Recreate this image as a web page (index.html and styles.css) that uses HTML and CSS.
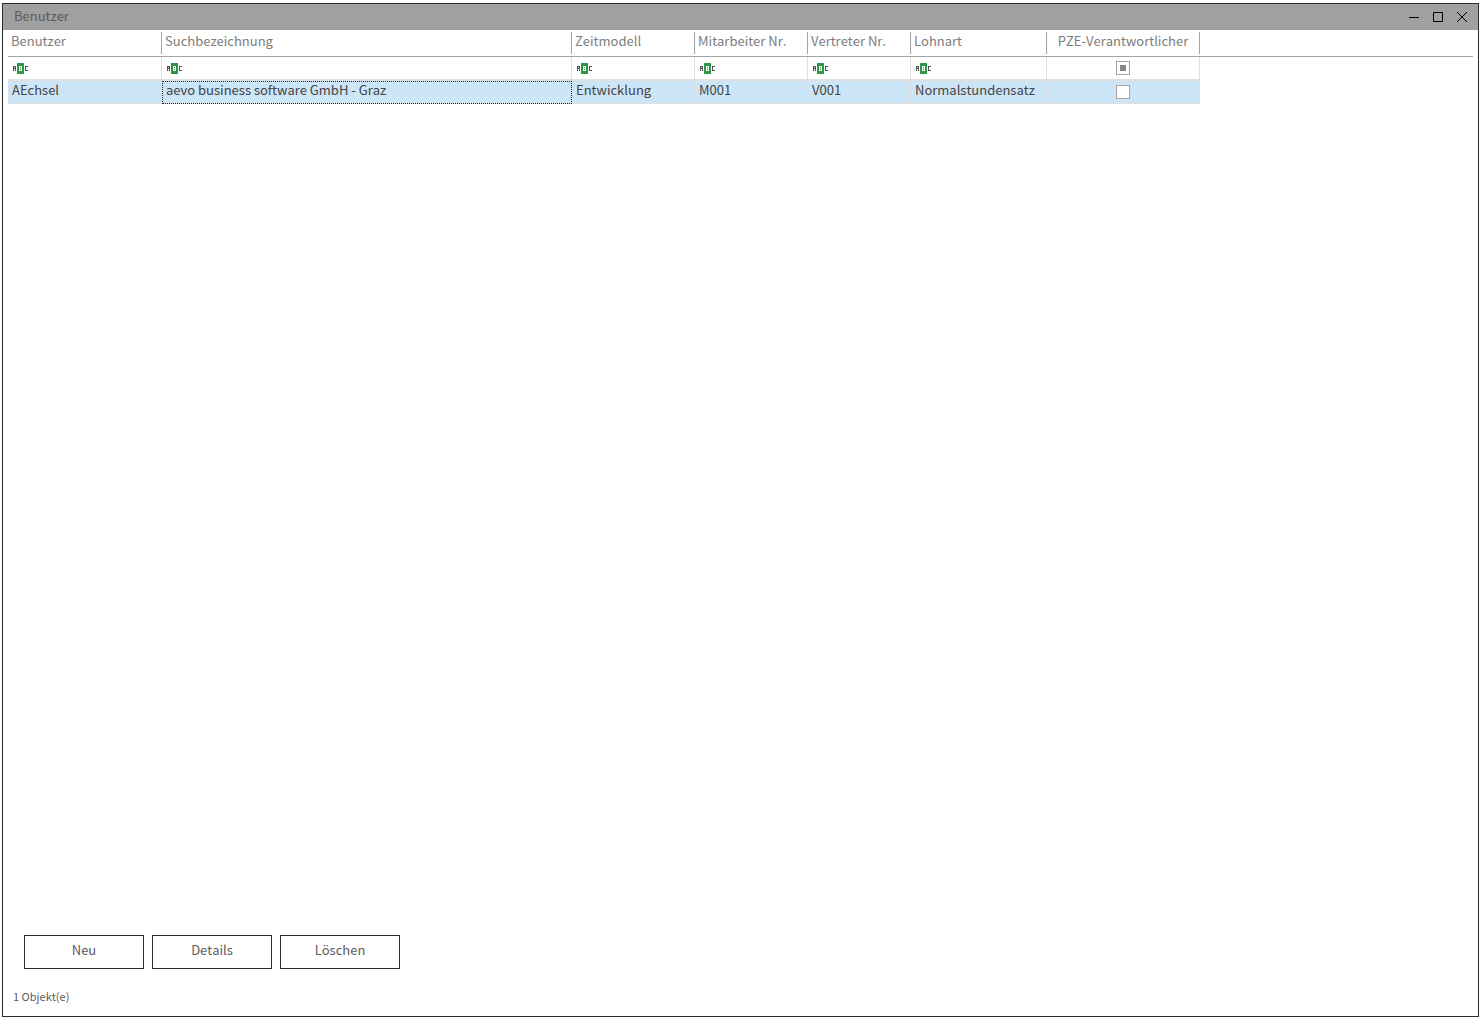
FILE: index.html
```
<!DOCTYPE html>
<html lang="de">
<head>
<meta charset="utf-8">
<title>Benutzer</title>
<link rel="stylesheet" href="styles.css">
</head>
<body>
<svg class="sprite" aria-hidden="true">
  <symbol id="abc" viewBox="0 0 15 11">
    <path fill="#555" d="M0 3h3v5h-1v-2h-1v2h-1zM12 3h3v1h-2v3h2v1h-3z"/>
    <path fill="#ccc" d="M1 4h1v1h-1z"/>
    <path fill="#2e9448" d="M4 0h7v11h-7z"/>
    <path fill="#fff" d="M6 3h3v5h-3z"/>
    <path fill="#2e9448" d="M7 4h1v1h-1zM7 6h1v1h-1z"/>
  </symbol>
</svg>
<main class="window">
  <header class="titlebar">
    <h1 class="title">Benutzer</h1>
    <div class="controls">
      <button class="control" type="button" aria-label="Minimieren"><svg width="10" height="10" viewBox="0 0 10 10"><path d="M0 5.5h10"/></svg></button>
      <button class="control" type="button" aria-label="Maximieren"><svg width="10" height="10" viewBox="0 0 10 10"><path d="M.5.5h9v9h-9z"/></svg></button>
      <button class="control" type="button" aria-label="Schließen"><svg width="10" height="10" viewBox="0 0 10 10"><path d="M0 0l10 10M10 0l-10 10"/></svg></button>
    </div>
  </header>
  <section class="content">
    <table class="grid">
      <colgroup>
        <col class="col-user"><col class="col-search"><col class="col-model"><col class="col-staff"><col class="col-agent"><col class="col-wage"><col class="col-pze"><col>
      </colgroup>
      <thead>
        <tr class="heads">
          <th><span class="head">Benutzer</span></th>
          <th><span class="head">Suchbezeichnung</span></th>
          <th><span class="head">Zeitmodell</span></th>
          <th><span class="head">Mitarbeiter Nr.</span></th>
          <th><span class="head">Vertreter Nr.</span></th>
          <th><span class="head">Lohnart</span></th>
          <th><span class="head head-center">PZE-Verantwortlicher</span></th>
          <td></td>
        </tr>
      </thead>
      <tbody>
        <tr class="filters">
          <td><label class="filter"><svg class="abc"><use href="#abc"/></svg><input class="filter-text" type="text" aria-label="Filter Benutzer"></label></td>
          <td><label class="filter"><svg class="abc"><use href="#abc"/></svg><input class="filter-text" type="text" aria-label="Filter Suchbezeichnung"></label></td>
          <td><label class="filter"><svg class="abc"><use href="#abc"/></svg><input class="filter-text" type="text" aria-label="Filter Zeitmodell"></label></td>
          <td><label class="filter"><svg class="abc"><use href="#abc"/></svg><input class="filter-text" type="text" aria-label="Filter Mitarbeiter Nr."></label></td>
          <td><label class="filter"><svg class="abc"><use href="#abc"/></svg><input class="filter-text" type="text" aria-label="Filter Vertreter Nr."></label></td>
          <td><label class="filter"><svg class="abc"><use href="#abc"/></svg><input class="filter-text" type="text" aria-label="Filter Lohnart"></label></td>
          <td class="check-cell"><input class="check check-any" type="checkbox" aria-label="Filter PZE-Verantwortlicher"></td>
          <td class="filler"></td>
        </tr>
        <tr class="row">
          <td>AEchsel</td>
          <td class="focused">aevo business software GmbH - Graz</td>
          <td>Entwicklung</td>
          <td>M001</td>
          <td>V001</td>
          <td>Normalstundensatz</td>
          <td class="check-cell"><input class="check" type="checkbox" aria-label="PZE-Verantwortlicher"></td>
          <td class="filler"></td>
        </tr>
      </tbody>
    </table>
  </section>
  <div class="actions">
    <button class="action" type="button">Neu</button>
    <button class="action" type="button">Details</button>
    <button class="action" type="button">Löschen</button>
  </div>
  <footer class="status">1 Objekt(e)</footer>
</main>
</body>
</html>
```
FILE: styles.css
```
* { box-sizing: border-box; }

body {
  margin: 0;
  padding: 3px 2px 4px;
  min-height: 100vh;
  display: flex;
  background: #fff;
  color: #444;
  font: 13px/18px "Noto Sans CJK SC", "Noto Sans", sans-serif;
  font-kerning: none;
}

.sprite { position: absolute; width: 0; height: 0; }

.window {
  flex: 1;
  display: flex;
  flex-direction: column;
  min-width: 0;
  border: 1px solid #2b2b2b;
}

.titlebar {
  display: flex;
  align-items: center;
  justify-content: space-between;
  height: 26px;
  padding: 0 4px 0 11px;
  background: #a0a0a0;
}

.title { margin: 0; padding-bottom: 2px; font-size: 13px; font-weight: 400; color: #5c5c5c; }

.controls { display: flex; }

.control {
  display: flex;
  align-items: center;
  justify-content: center;
  width: 24px;
  height: 26px;
  padding: 0;
  border: 0;
  background: none;
}

.control path { fill: none; stroke: #000; }

.content { flex: 1; padding: 0 5px; }

.grid {
  width: 100%;
  table-layout: fixed;
  border-collapse: separate;
  border-spacing: 0;
}

.col-user { width: 154px; }
.col-search { width: 410px; }
.col-model { width: 123px; }
.col-staff { width: 113px; }
.col-agent { width: 103px; }
.col-wage { width: 136px; }
.col-pze { width: 153px; }

.grid th, .grid td { padding: 0; white-space: nowrap; text-align: left; }

.heads th, .heads td {
  height: 27px;
  border-bottom: 1px solid #a5a5a5;
  font-weight: 400;
  color: #7d7d7d;
}

.head {
  display: block;
  height: 22px;
  padding-left: 3px;
  border-right: 1px solid #a5a5a5;
}

.head-center { padding: 0; text-align: center; }

.filters td {
  height: 24px;
  border-right: 1px solid #e0e0e0;
  border-bottom: 2px solid #e0e0e0;
}

.filter { display: flex; align-items: center; height: 22px; padding-left: 5px; }
.abc { flex: none; width: 15px; height: 11px; }

.filter-text {
  flex: 1;
  min-width: 0;
  height: 20px;
  padding: 0 4px;
  border: 0;
  background: none;
  font: inherit;
  color: inherit;
}

.grid .row td {
  height: 23px;
  padding: 0 0 4px 4px;
  border-right: 1px solid #dcdfe2;
  border-bottom: 1px solid #e0e0e0;
  background: #cce5f7;
}

.grid .row .focused {
  border-right-color: #cce5f7;
  outline: 1px dotted #222;
  outline-offset: -1px;
}

.grid .filters .filler, .grid .row .filler { border: 0; background: none; }

.grid .filters .check-cell, .grid .row .check-cell { padding: 0; text-align: center; }

.check {
  appearance: none;
  display: block;
  width: 14px;
  height: 14px;
  margin: 0 auto;
  border: 1px solid #a5a5a5;
  background: #fff;
}

.check-any { padding: 3px; background: #868686 content-box; }

.actions { display: flex; gap: 8px; padding: 0 21px; }

.action {
  width: 120px;
  height: 34px;
  padding: 0 0 4px;
  border: 1px solid #2b2b2b;
  background: #fff;
  font: inherit;
  color: #5c5c5c;
}

.status {
  padding: 18px 10px 11px;
  font-size: 11px;
  color: #5c5c5c;
}
```
